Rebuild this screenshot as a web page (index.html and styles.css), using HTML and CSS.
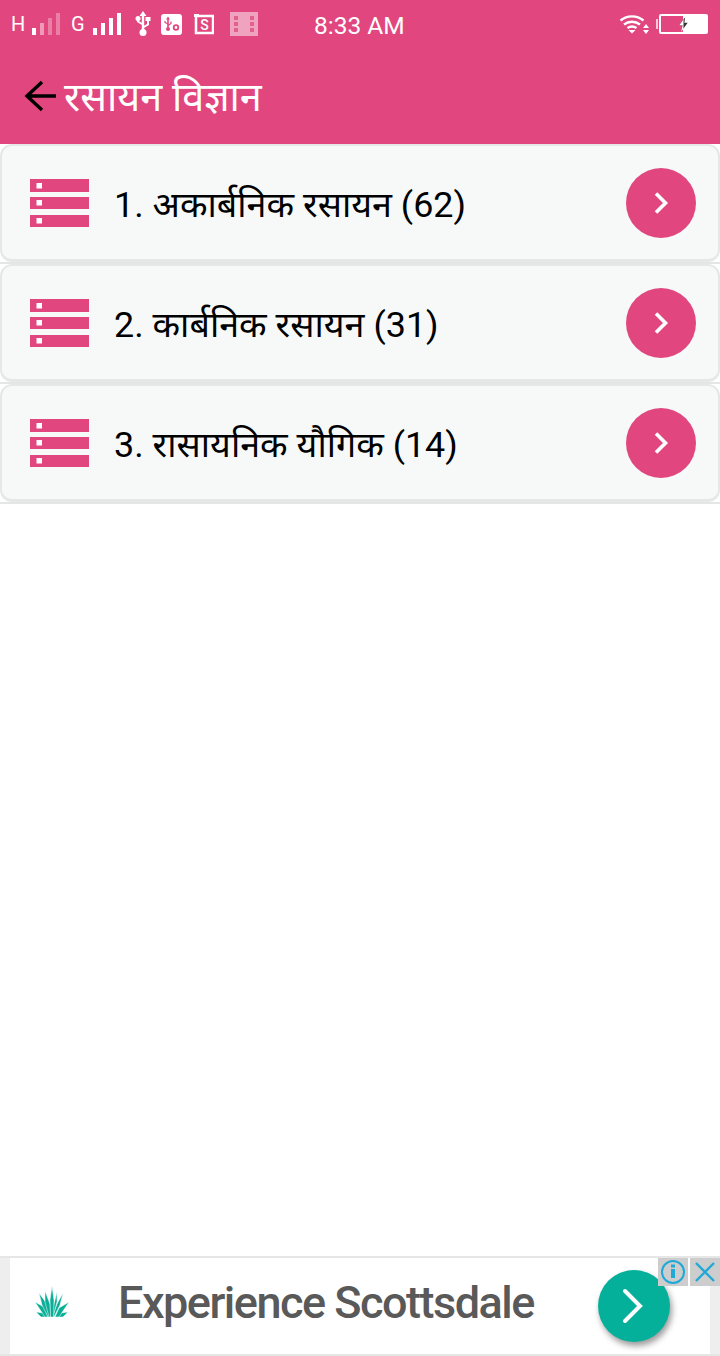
FILE: index.html
```html
<!DOCTYPE html>
<html lang="hi">
<head>
    <meta charset="utf-8">
    <title>रसायन विज्ञान</title>
    <link rel="stylesheet" href="styles.css">
</head>
<body>
    <div class="app">
        <!-- Status bar and title -->
        <header class="header">
            <div class="status">
                <div class="status-left">
                    <span class="net">H</span>
                    <svg class="icon-signal" width="30" height="24" viewBox="0 0 30 24"><rect x="1" y="16" width="4" height="7" fill="#fff"/><rect x="9" y="11" width="4" height="12" fill="#fff" opacity=".45"/><rect x="17" y="6" width="4" height="17" fill="#fff" opacity=".3"/><rect x="25" y="1" width="4" height="22" fill="#fff" opacity=".3"/></svg>
                    <span class="net net-g">G</span>
                    <svg class="icon-signal" width="30" height="24" viewBox="0 0 30 24"><rect x="1" y="16" width="4" height="7" fill="#fff"/><rect x="9" y="11" width="4" height="12" fill="#fff"/><rect x="17" y="6" width="4" height="17" fill="#fff"/><rect x="25" y="1" width="4" height="22" fill="#fff"/></svg>
                    <svg class="icon-usb" width="16" height="26" viewBox="0 0 16 26"><path d="M8 0l3.500 5H9.200v14H6.800V5H4.500z" fill="#fff"/><circle cx="8" cy="21.500" r="3.500" fill="#fff"/><path d="M8 16.500l5-3V9.500M8 13.500l-5-3V9" fill="none" stroke="#fff" stroke-width="2"/><rect x="10.500" y="6" width="5" height="4" fill="#fff"/><circle cx="3" cy="7.500" r="2.500" fill="#fff"/></svg>
                    <svg class="icon-debug" width="21" height="21" viewBox="0 0 21 21"><rect width="21" height="21" rx="3" fill="#fff"/><path d="M7 2.500l2 3H7.800v8H6.200v-8H5z" fill="#e1477e"/><circle cx="7" cy="15" r="2" fill="#e1477e"/><path d="M7 11.500l3-2V7.500M7 10L4 8.500V7" fill="none" stroke="#e1477e" stroke-width="1.200"/><circle cx="15" cy="13.500" r="2.300" fill="none" stroke="#e1477e" stroke-width="1.800"/></svg>
                    <svg class="icon-s" width="20" height="22" viewBox="0 0 20 22"><rect x="2" y="3" width="17" height="17" fill="none" stroke="#fff" stroke-width="2.500"/><rect x="0" y="1" width="5" height="3" fill="#fff"/><text x="10.500" y="16.500" class="icon-s-text">S</text></svg>
                    <svg class="icon-film" width="28" height="24" viewBox="0 0 28 24"><path d="M0 0h28v24H0z" fill="#fff" opacity=".5"/><path d="M4 4h4v4H4zM4 10h4v4H4zM4 16h4v4H4zM20 4h4v4h-4zM20 10h4v4h-4zM20 16h4v4h-4z" fill="#e1477e" opacity=".75"/></svg>
                    <span class="time">8:33 AM</span>
                </div>
                <div class="status-right">
                    <svg class="icon-wifi" width="31" height="22" viewBox="0 0 31 22"><path d="M1.500 7.500a18 18 0 0 1 23 0M5 11.500a13 13 0 0 1 16 0M8.500 15a8 8 0 0 1 9 0" fill="none" stroke="#fff" stroke-width="2.400"/><path d="M9.500 17h7L13 20.500zM24 15l3-4 3 4zM24 17h6l-3 4z" fill="#fff"/></svg>
                    <div class="battery">
                        <div class="battery-fill"></div>
                        <svg class="battery-bolt" width="11" height="15" viewBox="0 0 12 18"><path d="M8 0L1 10h4l-2 8 8-11H7z" fill="#333"/><path d="M8 0L1 10h4l-2 8 3-4V0z" fill="#fff"/></svg>
                    </div>
                </div>
            </div>
            <div class="titlebar">
                <svg class="back" width="32" height="34" viewBox="0 0 32 34"><path d="M32 17H3M18 3L3 17l15 14" fill="none" stroke="#000" stroke-width="3.400"/></svg>
                <h1 class="title">रसायन विज्ञान</h1>
            </div>
        </header>

        <!-- Chapter list -->
        <main class="list">
            <div class="row">
                <div class="card">
                    <svg class="row-icon" width="59" height="48" viewBox="0 0 59 48"><use href="#stack"/></svg>
                    <span class="row-text">1. अकार्बनिक रसायन (62)</span>
                    <span class="go"><svg width="16" height="24" viewBox="0 0 16 24"><path d="M3 2.500l9.500 9.500L3 21.500" fill="none" stroke="#fff" stroke-width="3.600"/></svg></span>
                </div>
            </div>
            <div class="row">
                <div class="card">
                    <svg class="row-icon" width="59" height="48" viewBox="0 0 59 48"><use href="#stack"/></svg>
                    <span class="row-text">2. कार्बनिक रसायन (31)</span>
                    <span class="go"><svg width="16" height="24" viewBox="0 0 16 24"><path d="M3 2.500l9.500 9.500L3 21.500" fill="none" stroke="#fff" stroke-width="3.600"/></svg></span>
                </div>
            </div>
            <div class="row">
                <div class="card">
                    <svg class="row-icon" width="59" height="48" viewBox="0 0 59 48"><use href="#stack"/></svg>
                    <span class="row-text">3. रासायनिक यौगिक (14)</span>
                    <span class="go"><svg width="16" height="24" viewBox="0 0 16 24"><path d="M3 2.500l9.500 9.500L3 21.500" fill="none" stroke="#fff" stroke-width="3.600"/></svg></span>
                </div>
            </div>
        </main>

        <!-- Ad banner -->
        <footer class="ad">
            <div class="ad-inner">
                <svg class="ad-logo" width="34" height="32" viewBox="0 0 34 32">
                    <g fill="#0aae97" stroke="#fff" stroke-width=".5">
                        <path d="M1 26l7 1 3.500 4H6z"/>
                        <path d="M33 26l-7 1-3.500 4H28z"/>
                        <path d="M0 16l9 5 4 10h-3z"/>
                        <path d="M34 16l-10 6-4 9h4z"/>
                        <path d="M4 7l8 11 3 13h-2L7 19z"/>
                        <path d="M28 7l-3 12-6 12h-2l5-13z"/>
                        <path d="M10 5l5 13 1 13h-2l-4-15z"/>
                        <path d="M22 6v10l-4 15h-2l3-13z"/>
                        <path d="M17 0l2 14-.5 17h-3L15 14z"/>
                    </g>
                </svg>
                <span class="ad-text">Experience Scottsdale</span>
                <span class="ad-go"><svg width="28" height="36" viewBox="0 0 28 36"><path d="M5 3l15 15L5 33" fill="none" stroke="#fff" stroke-width="4" stroke-linecap="round"/></svg></span>
            </div>
            <div class="ad-badges">
                <span class="badge"><svg width="26" height="26" viewBox="0 0 26 26"><circle cx="13" cy="13" r="11" fill="none" stroke="#1fa9d6" stroke-width="2"/><path d="M11 10h4v9h-4zM11 5.500h4v3h-4z" fill="#1fa9d6"/></svg></span>
                <span class="badge"><svg width="22" height="22" viewBox="0 0 22 22"><path d="M2 2l18 18M20 2L2 20" fill="none" stroke="#1fa9d6" stroke-width="2.400"/></svg></span>
            </div>
        </footer>
    </div>

    <!-- Shared list icon -->
    <svg class="defs" width="0" height="0">
        <defs>
            <g id="stack">
                <path d="M0 0h59v13H0zM0 18h59v12H0zM0 36h59v12H0z" fill="#e1477e"/>
                <path d="M6.500 4h5.500v5.500H6.500zM6.500 21h5.500v5.500H6.500zM6.500 39h5.500v5.500H6.500z" fill="#fff"/>
            </g>
        </defs>
    </svg>
</body>
</html>
```

FILE: styles.css
```css
* {
    box-sizing: border-box;
}

body {
    margin: 0;
    background: #fff;
    font-family: Roboto, "Noto Sans", "Noto Sans Devanagari", "Lohit Devanagari", sans-serif;
}

.app {
    display: flex;
    flex-direction: column;
    height: 1356px;
    width: 720px;
    overflow: hidden;
}

.defs {
    position: absolute;
}

/* Header */
.header {
    height: 144px;
    background: #e1477e;
    color: #fff;
}

.status {
    display: flex;
    justify-content: space-between;
    align-items: center;
    height: 48px;
    padding: 0 12px 0 11px;
}

.status-left,
.status-right {
    display: flex;
    align-items: center;
}

.net {
    font-size: 20px;
    width: 14px;
}

.net-g {
    margin-left: 10px;
    width: 17px;
}

.icon-signal {
    margin-left: 6px;
}

.net-g + .icon-signal {
    margin-left: 4px;
}

.icon-usb {
    margin-left: 13px;
}

.icon-debug {
    margin-left: 10px;
}

.icon-s {
    margin-left: 12px;
}

.icon-s-text {
    font-size: 14px;
    font-weight: 500;
    fill: #fff;
    text-anchor: middle;
}

.icon-film {
    margin-left: 16px;
}

.time {
    margin-left: 56px;
    padding-top: 2px;
    font-size: 24.500px;
}

.icon-wifi {
    margin-right: 9px;
}

.battery {
    position: relative;
    width: 49px;
    height: 20px;
    border: 2px solid #fff;
    border-radius: 2px;
    display: flex;
    justify-content: flex-end;
}

.battery::before {
    content: "";
    position: absolute;
    left: -5px;
    top: 3px;
    width: 2px;
    height: 10px;
    background: #fff;
    opacity: .7;
}

.battery-fill {
    width: 23px;
    background: #fff;
}

.battery-bolt {
    position: absolute;
    left: 17px;
    top: 1px;
}

.titlebar {
    display: flex;
    align-items: center;
    height: 96px;
    padding-left: 24px;
}

.back {
    flex: none;
}

.title {
    margin: 4px 0 0 8px;
    font-size: 39.600px;
    font-weight: 400;
    line-height: 1;
}

/* List */
.list {
    flex: 1;
}

.row {
    height: 120px;
    border-bottom: 2px solid #e4e6e6;
}

.card {
    display: flex;
    align-items: center;
    height: 100%;
    padding: 0 22px 0 28px;
    background: #f7f9f9;
    border: 2px solid #e6e8e8;
    border-bottom-width: 3px;
    border-radius: 12px;
}

.row-icon {
    flex: none;
}

.row-text {
    flex: 1;
    margin-left: 25px;
    padding-top: 1px;
    font-size: 35.900px;
    color: #000;
}

.go {
    display: flex;
    align-items: center;
    justify-content: center;
    width: 70px;
    height: 70px;
    border-radius: 50%;
    background: #e1477e;
}

/* Ad */
.ad {
    position: relative;
    height: 100px;
    padding: 0 10px;
    background: #eee;
    border-top: 2px solid #e6e6e6;
    border-bottom: 2px solid #e6e6e6;
}

.ad-inner {
    display: flex;
    align-items: center;
    height: 100%;
    background: #fff;
    padding-left: 25px;
}

.ad-logo {
    margin-top: -8px;
}

.ad-text {
    margin: -8px 0 0 49px;
    font-size: 45px;
    font-weight: 500;
    letter-spacing: -1.500px;
    color: #595959;
}

.ad-go {
    display: flex;
    align-items: center;
    justify-content: center;
    width: 72px;
    height: 72px;
    margin-left: auto;
    margin-right: 40px;
    border-radius: 50%;
    background: #05b09a;
    box-shadow: 2px 4px 6px rgba(0, 0, 0, .4);
}

.ad-badges {
    position: absolute;
    top: 0;
    right: 0;
    display: flex;
    gap: 2px;
}

.badge {
    display: flex;
    align-items: center;
    justify-content: center;
    width: 30px;
    height: 28px;
    background: #cdcdcd;
}
```
